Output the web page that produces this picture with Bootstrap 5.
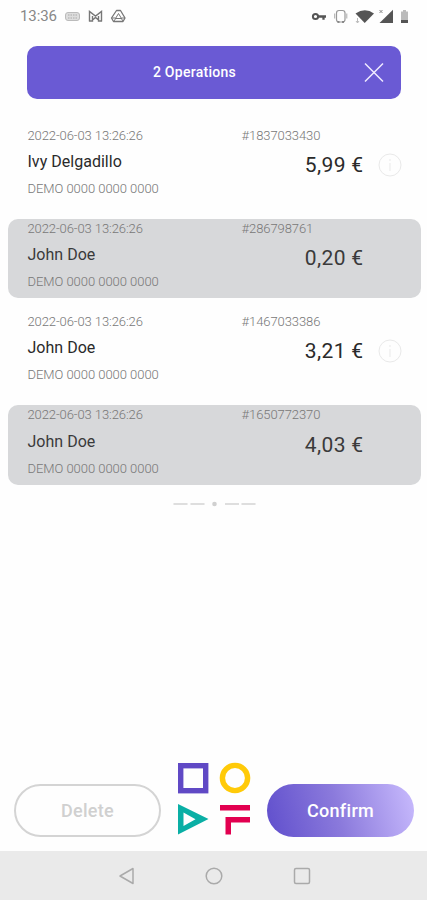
<!DOCTYPE html>
<html lang="en">
<head>
<meta charset="utf-8">
<meta name="viewport" content="width=device-width, initial-scale=1">
<title>Operations</title>
<link href="https://cdn.jsdelivr.net/npm/bootstrap@5.3.0/dist/css/bootstrap.min.css" rel="stylesheet">
<style>
body{font-family:Roboto,sans-serif;background:#fefefe;height:900px;overflow:hidden}
svg{display:block;flex:none}
.status{height:32px;padding:0 18px 0 20px;color:#888}
.clock{font-size:15px;line-height:32px;width:37px;white-space:nowrap;letter-spacing:-.1px}
.banner{height:53px;margin:14px 26px 0 27px;border-radius:10px;background:#6a5ad4;padding-right:16px}
.banner-title{font-size:14px;font-weight:500;letter-spacing:.28px;padding-right:1px}
.ops{margin:26.5px 6.5px 0 7.5px;gap:13.4px}
.op{height:79.8px;border-radius:10px;padding:0 19px 0 20px}
.picked{background:#d7d8da}
.meta{font-size:13px;font-weight:300;color:#777;line-height:19px;white-space:nowrap}
.when{width:214px;letter-spacing:-.09px}
.ref{letter-spacing:-.07px}
.who{font-size:16px;line-height:20px;color:#2a2a2a;margin-top:7.5px;letter-spacing:.02px}
.acct{letter-spacing:-.04px;margin-top:7px}
.sum{font-size:21px;line-height:24px;color:#2a2a2a;letter-spacing:.35px;white-space:nowrap;margin-top:8.5px}
.picked .who,.picked .sum{color:#3a3a3a}
.infoslot{width:24px;margin:8px 0 0 14px}
.actions{height:76px;padding:0 13px 0 14px;margin-bottom:13px}
.pill{width:147px;height:53px;border-radius:27px;font-size:18px;font-weight:500;padding:0;margin-bottom:1px}
.pill-del,.pill-del:hover{border:2px solid #d4d4d4;color:#d0d0d0;background:#fefefe;letter-spacing:.3px}
.pill-ok,.pill-ok:hover{border:0;color:#fff;background:linear-gradient(75deg,#6453ce 5%,#8b7adc 48%,#c4b6fb 96%);letter-spacing:.3px}
.softkeys{height:49px;background:#eaeaea;gap:70px}
</style>
</head>
<body class="d-flex flex-column">
<header class="status d-flex align-items-center justify-content-between">
  <div class="d-flex align-items-center">
    <span class="clock">13:36</span>
    <svg width="72" height="20" viewBox="57 6 72 20" fill="none">
      <rect x="65.500" y="12.500" width="14" height="8" rx="2.500" fill="#ddd" stroke="#bbb"/>
      <path d="M68 15h9M68 18h9" stroke="#aaa" stroke-dasharray="1.5 1"/>
      <path d="M89.500 21.500V11.500L95.500 16 101.500 11.500V21.500M89 21h3.500v-5M102 21h-3.500v-5M92.500 20l3-2.500 3 2.500" stroke="#777" stroke-width="1.400"/>
      <path d="M116.500 10.500h4l4.500 7.500-2 3.500h-9.500l-2-3.500z" stroke="#777" stroke-width="1.300" stroke-linejoin="round"/>
      <path d="M118.500 13.500l3 5h-6zM112 18h3.500M121.500 18h3.500M114 21l2-3M123 21l-2-3" stroke="#777"/>
    </svg>
  </div>
  <svg width="98" height="22" viewBox="311 5 98 22" fill="none">
    <circle cx="315.500" cy="16.500" r="2.600" stroke="#555" stroke-width="2"/>
    <path d="M318 16.500h8M323.500 16.500v3.300" stroke="#555" stroke-width="2.300"/>
    <rect x="336.500" y="10.500" width="8.500" height="11.500" rx="2.500" stroke="#999" stroke-width="1.200"/>
    <path d="M334.700 13.500v5M346.800 13.500v5" stroke="#aaa"/><path d="M337.500 22h2M342 22h2" stroke="#777" stroke-width="1.500"/>
    <path d="M355.500 13.500q9.500-6.500 18.500 0l-9.300 9.500z" fill="#555"/>
    <path d="M357.500 18v5M356 21l1.500 2 1.500-2" stroke="#bbb"/>
    <path d="M393 9.700v13.300h-13.500z" fill="#555"/><path d="M379.500 10l3 3M382.500 10l-3 3" stroke="#888"/>
    <path d="M401 11.500h2v-1.500h3v1.500h2v8.500h-7z" fill="#bbb"/><path d="M401 20h7v3h-7z" fill="#555"/>
  </svg>
</header>

<div class="banner d-flex align-items-center text-white">
  <span class="banner-title flex-grow-1 text-center">2 Operations</span>
  <svg width="22" height="22" viewBox="0 0 22 22"><path d="M2 1.500l18 18M20 1.500l-18 18" stroke="#f0ebff" stroke-width="1.500"/></svg>
</div>

<main class="ops d-flex flex-column">
  <section class="op d-flex">
    <div class="when"><div class="meta">2022-06-03 13:26:26</div><div class="who">Ivy Delgadillo</div><div class="meta acct">DEMO 0000 0000 0000</div></div>
    <div class="flex-grow-1"><div class="meta ref">#1837033430</div>
      <div class="d-flex justify-content-end"><span class="sum">5,99 €</span><span class="infoslot"><svg width="24" height="24" viewBox="0 0 24 24" fill="none" stroke="#e9e9e9"><circle cx="12" cy="12" r="11"/><path d="M12 10v8M12 6v2"/></svg></span></div></div>
  </section>
  <section class="op picked d-flex">
    <div class="when"><div class="meta">2022-06-03 13:26:26</div><div class="who">John Doe</div><div class="meta acct">DEMO 0000 0000 0000</div></div>
    <div class="flex-grow-1"><div class="meta ref">#286798761</div>
      <div class="d-flex justify-content-end"><span class="sum">0,20 €</span><span class="infoslot"></span></div></div>
  </section>
  <section class="op d-flex">
    <div class="when"><div class="meta">2022-06-03 13:26:26</div><div class="who">John Doe</div><div class="meta acct">DEMO 0000 0000 0000</div></div>
    <div class="flex-grow-1"><div class="meta ref">#1467033386</div>
      <div class="d-flex justify-content-end"><span class="sum">3,21 €</span><span class="infoslot"><svg width="24" height="24" viewBox="0 0 24 24" fill="none" stroke="#e9e9e9"><circle cx="12" cy="12" r="11"/><path d="M12 10v8M12 6v2"/></svg></span></div></div>
  </section>
  <section class="op picked d-flex">
    <div class="when"><div class="meta">2022-06-03 13:26:26</div><div class="who">John Doe</div><div class="meta acct">DEMO 0000 0000 0000</div></div>
    <div class="flex-grow-1"><div class="meta ref">#1650772370</div>
      <div class="d-flex justify-content-end"><span class="sum">4,03 €</span><span class="infoslot"></span></div></div>
  </section>
</main>
<div class="d-flex justify-content-center pt-3">
  <svg width="84" height="8" viewBox="172 501 84 8"><path d="M173.500 504h14M190.500 504h14M225 504h14M241.500 504h14" stroke="#d3d3d3" stroke-width="1.500"/><circle cx="214.500" cy="504" r="2.300" fill="#d0d0d0"/></svg>
</div>

<footer class="mt-auto">
  <div class="actions d-flex align-items-end justify-content-between">
    <button class="btn pill pill-del">Delete</button>
    <svg width="74" height="74" viewBox="177 762 74 74" fill="none" class="align-self-start">
      <rect x="180.700" y="765.700" width="25" height="25" stroke="#6049c5" stroke-width="5.400"/>
      <circle cx="235" cy="778" r="12.600" stroke="#ffca08" stroke-width="5.400"/>
      <path d="M178 804l30.500 15-30.500 15.500zM183.500 812.500v13.500l12-6.800z" fill="#0aafa5" fill-rule="evenodd"/>
      <path d="M220 805h30v5.500h-30zM225.500 817h24.500v5.500h-19v12h-5.500z" fill="#e20050"/>
    </svg>
    <button class="btn pill pill-ok">Confirm</button>
  </div>
  <nav class="softkeys d-flex align-items-center justify-content-center">
    <svg width="18" height="20" viewBox="0 0 18 20" fill="none" stroke="#aaa" stroke-width="1.500" stroke-linejoin="round"><path d="M16 2.500v15L3 10z"/></svg>
    <svg width="18" height="18" viewBox="0 0 18 18" fill="none" stroke="#aaa" stroke-width="1.500"><circle cx="9" cy="9" r="7.800"/></svg>
    <svg width="18" height="18" viewBox="0 0 18 18" fill="none" stroke="#aaa" stroke-width="1.500"><rect x="1.500" y="1.500" width="15" height="15" rx="1.500"/></svg>
  </nav>
</footer>
<script src="https://cdn.jsdelivr.net/npm/bootstrap@5.3.0/dist/js/bootstrap.bundle.min.js"></script>
</body>
</html>
